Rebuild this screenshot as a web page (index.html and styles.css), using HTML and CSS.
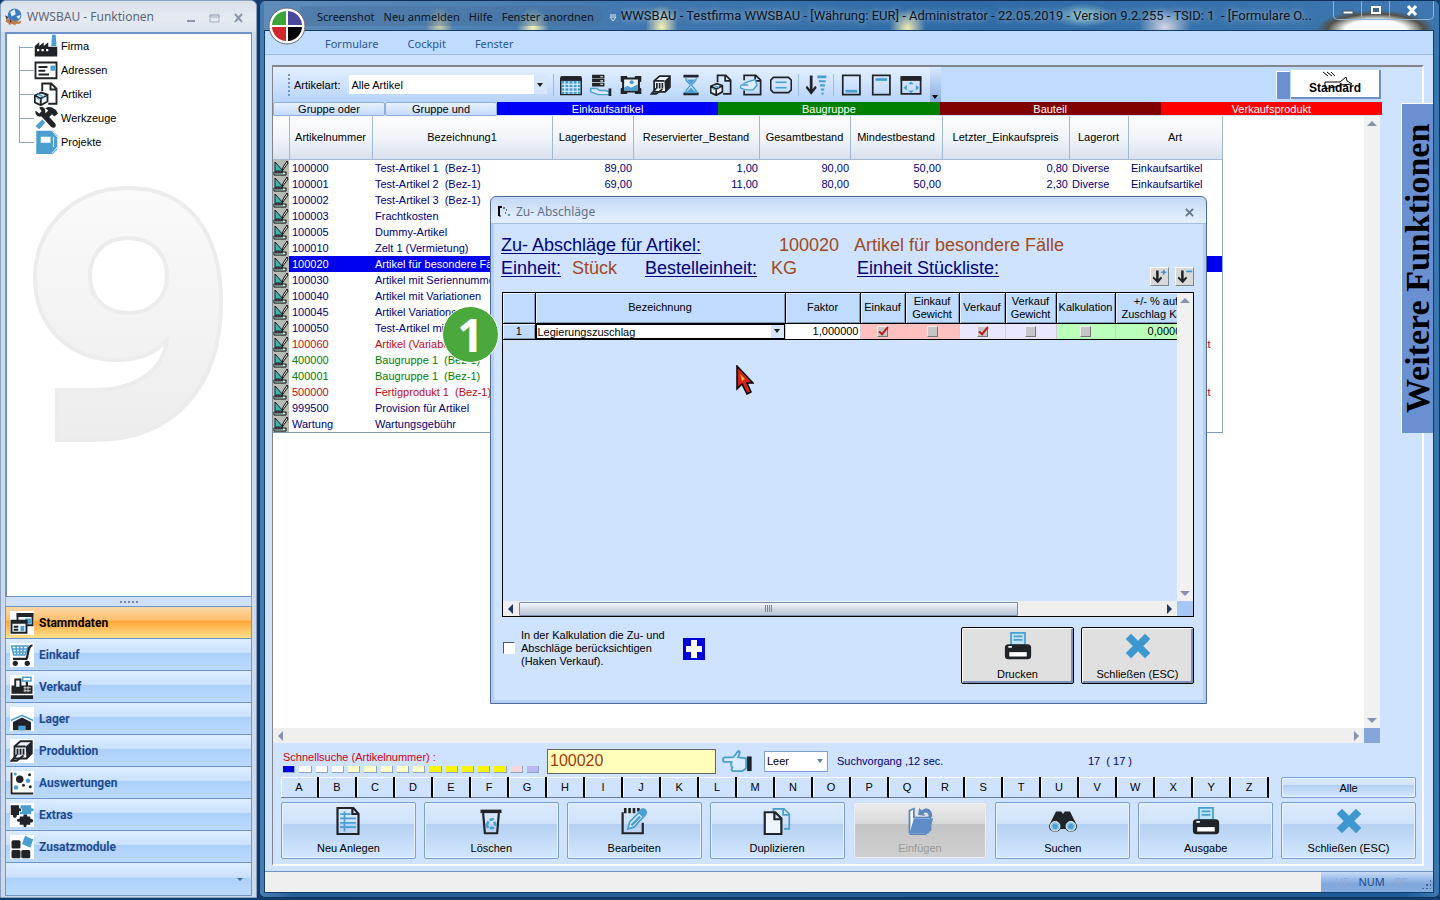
FILE: index.html
```html
<!DOCTYPE html>
<html lang="de">
<head>
<meta charset="utf-8">
<title>WWSBAU</title>
<link rel="stylesheet" href="styles.css">
</head>
<body>
<svg class="defs" aria-hidden="true">
  <symbol id="i-factory" viewBox="0 0 32 32"><path class="k" d="M1 30V16l6-5v5l6-5v5l6-5v6h4V30z M23 17h8v13h-9z"/><path class="b" d="M24 1h5l1 15h-7z"/><path class="w" d="M4 20h3v3H4zM10 20h3v3h-3zM16 20h3v3h-3z"/></symbol>
  <symbol id="i-card" viewBox="0 0 32 32"><path class="ks" d="M2 6h28v21H2z"/><path class="ks" d="M6 12h12M6 17h9M6 22h14"/><path class="b" d="M22 10h6v7h-6z"/></symbol>
  <symbol id="i-article" viewBox="0 0 32 32"><path class="ks" d="M11 12V2h12l7 7v20H19M22 2v8h8"/><path class="ks wf" d="M1 18l9-4 8 3v9l-9 5-8-4zM1 18l8 4 9-5M9 22v9"/><path class="bs" d="M5 16l8 4M4 21l3 2"/></symbol>
  <symbol id="i-tools" viewBox="0 0 32 32"><path class="k" d="M2 6l5 4 3-3-3-5c5-2 9 1 8 7l13 14c3 4-1 8-5 5L10 14C5 15 1 12 2 6z"/><path class="k" d="M15 3c5-3 9-2 12 1l2 1 3 5-5 4-3-3-5 5-5-5 5-5z"/><path class="b" d="M11 18l4 4-8 9-5-4z"/></symbol>
  <symbol id="i-book" viewBox="0 0 32 32"><path class="b" d="M3 1h22l6 6v19l-6 6H3z"/><path class="w" d="M9 9h13v8H9z"/><path d="M24 1l7 8M24 31l7-8M26 9v14" stroke="#d8ecf8" stroke-width="1.5"/></symbol>
  <symbol id="i-stamm" viewBox="0 0 32 32"><path class="ks wf" d="M10 4h20v15H10z"/><path class="k" d="M9 3h22v5H9z"/><path class="b" d="M20 10h8v7h-8z"/><path class="ks wf" d="M2 13h20v16H2z"/><path class="k" d="M2 12h21v5H2z"/><path class="ks" d="M5 21h6M5 25h6"/><path class="b" d="M14 20h5v7h-5z"/></symbol>
  <symbol id="i-cart" viewBox="0 0 32 32"><path class="bs" d="M2 4h22l-4 12H5zM3 8h19M4 12h17M8 4l1 12M13 4v12M18 4l-1 12"/><path d="M30 3c-7 1-5 12-8 18H4" fill="none" stroke="#202428" stroke-width="3"/><circle class="k" cx="7" cy="27" r="3.5"/><circle class="k" cx="23" cy="27" r="3.5"/></symbol>
  <symbol id="i-register" viewBox="0 0 32 32"><path class="k" d="M2 14h28v11H2zM1 27h30v5H1z"/><path class="ks wf" d="M7 6h7v11H7z"/><path class="bs" d="M17 3h11v5H17z"/><path class="k" d="M21 9h3v6h-3z"/><path d="M18 17h10M18 21h10M20 15v8M24 15v8" stroke="#fff"/></symbol>
  <symbol id="i-hall" viewBox="0 0 32 32"><path d="M1 18l15-7 15 7" fill="none" stroke="#4a9fd0" stroke-width="2"/><path class="k" d="M4 20l12-6 12 6v11H4z"/><path class="b" d="M11 25h10v6H11z"/></symbol>
  <symbol id="i-prod" viewBox="0 0 32 32"><path class="ks wf" d="M6 10l8-7h15v16l-7 7H6z"/><path class="k" d="M21 10l8-7v16l-7 8z"/><path class="ks" d="M6 10h15M10 13v8M14 13v8M18 13v8M9 21l-7 8h7l9-7"/></symbol>
  <symbol id="i-chart" viewBox="0 0 32 32"><path class="ks" d="M2 2v28h29"/><circle class="k" cx="13" cy="11" r="5"/><circle class="k" cx="26" cy="5" r="2"/><circle class="k" cx="18" cy="19" r="2"/><circle class="k" cx="27" cy="21" r="2"/><circle class="b" cx="24" cy="13" r="3"/><circle class="b" cx="8" cy="22" r="3"/><circle class="b" cx="7" cy="4" r="2"/></symbol>
  <symbol id="i-puzzle" viewBox="0 0 32 32"><path class="k" d="M1 3h11v4c4-1 4 5 0 4v5H9c1 5-6 5-5 0H1z"/><path class="b" d="M14 3h14v4c5-1 5 5 0 4v4h-5c0 4-6 4-5 0h-5v-3c4 1 4-6 1-5z"/><path class="k" d="M13 18h5c-1-3 6-3 5 0h4v3c5-1 5 6 0 5v3h-5c1 4-5 4-4 0h-5v-4c-5 1-5-5 0-4z"/></symbol>
  <symbol id="i-modules" viewBox="0 0 32 32"><rect class="k" x="2" y="7" width="12" height="11" rx="2"/><rect class="k" x="2" y="20" width="12" height="11" rx="2"/><rect class="k" x="15" y="20" width="12" height="11" rx="2"/><path class="b" d="M20 1l11 5-4 11-11-5z"/></symbol>
  <symbol id="i-grid" viewBox="0 0 32 32"><path class="b" d="M2 5h28v24H2z"/><path d="M2 15h28M2 20h28M2 25h28M7 10v20M13 10v20M19 10v20M25 10v20" stroke="#e8f4ff" stroke-width="1.5"/><path class="k" d="M1 3h30v7H1z"/><path d="M1 5v25h30V5" fill="none" stroke="#202428" stroke-width="2"/></symbol>
  <symbol id="i-server" viewBox="0 0 32 32"><path class="k" d="M3 1h18v5H3zM3 7h18v5H3zM3 13h18v5H3z"/><path d="M15 4h4M15 10h4M15 15h4" stroke="#fff" stroke-width="1.5"/><path d="M1 21h9l4 3h9l5 2v4H12L1 26z" fill="#dcebfc" stroke="#4a9fd0" stroke-width="2"/><path class="k" d="M27 21h4v11h-4z"/></symbol>
  <symbol id="i-image" viewBox="0 0 32 32"><path class="k" d="M1 3h9l1 2h10l1-2h9v8l-2 1v8l2 1v8h-9l-1-2H11l-1 2H1v-8l2-1v-8l-2-1z"/><path fill="#eaf4fd" d="M6 8h20v16H6z"/><path class="b" d="M6 20l5-3 5 3 10-5v9H6z"/><circle class="b" cx="17" cy="12" r="3"/></symbol>
  <symbol id="i-hour" viewBox="0 0 32 32"><path class="k" d="M5 1h22v4H5zM5 27h22v4H5z"/><path class="bs" d="M8 5c0 7 7 8 7 11s-7 5-7 11h16c0-6-7-8-7-11s7-4 7-11"/><path class="b" d="M10 8h12l-6 7zM16 20l7 7H9z"/></symbol>
  <symbol id="i-link" viewBox="0 0 32 32"><path class="ks" d="M6 9V2h17l7 7v21H6v-6M22 2v8h8"/><path d="M5 14l7-3 10-3 3 8-6 7H8l-6-2c-3-2-1-6 2-5h8" fill="#dcebfc" stroke="#4a9fd0" stroke-width="2"/></symbol>
  <symbol id="i-label" viewBox="0 0 32 32"><path class="ks" d="M5 5h22l4 4v14l-4 4H5l-4-4V9z"/><path class="bs" d="M8 12h16M8 20h16"/></symbol>
  <symbol id="i-sort" viewBox="0 0 32 32"><path class="k" d="M7 2h4v20l4-5 2 3-8 10-8-10 2-3 4 5z"/><path class="b" d="M18 2h13v4H18zM20 9h10v3H20zM22 15h7v3h-7zM23 21h5v3h-5zM24 27h3v3h-3z"/></symbol>
  <symbol id="i-bot" viewBox="0 0 32 32"><path class="ks" d="M4 2h25v28H4z"/><path class="b" d="M8 23h17v4H8z"/></symbol>
  <symbol id="i-top" viewBox="0 0 32 32"><path class="ks" d="M4 2h25v28H4z"/><path class="b" d="M8 6h17v4H8z"/></symbol>
  <symbol id="i-move" viewBox="0 0 32 32"><path class="ks" d="M2 5h28v24H2z"/><path class="k" d="M1 3h30v7H1z"/><path class="b" d="M16 11l4 4h-8zM16 28l4-4h-8zM5 20l5-4v8zM28 20l-5-4v8z"/></symbol>
  <symbol id="i-ruler" viewBox="0 0 16 16"><path fill="#b8bab4" d="M0 0h16v16H0z"/><path d="M2 2v9h8z" fill="#39b7a2" stroke="#123" stroke-width="1"/><path d="M1 12h12v3H1z" fill="#dff" stroke="#000"/><path d="M3 12v2M5 12v2M7 12v2M9 12v2" stroke="#000"/><path d="M14 1l1 2-5 7-1-1z" fill="#fff" stroke="#000"/></symbol>
  <symbol id="i-new" viewBox="0 0 32 32"><path class="ks" d="M4 1h18l6 7v23H4zM21 1v7h7"/><path class="bs" d="M7 8h12M7 13h18M7 18h18M7 23h18M12 5v23"/></symbol>
  <symbol id="i-bin" viewBox="0 0 32 32"><path class="k" d="M4 3h24v4H4z"/><path class="ks" d="M7 7l2 23h14l2-23"/><path d="M11 21l3-6 4-1 3 6-3 4h-5z" fill="none" stroke="#4a9fd0" stroke-width="3" stroke-dasharray="5 2"/></symbol>
  <symbol id="i-edit" viewBox="0 0 32 32"><path class="ks" d="M3 6v24h23V18"/><path d="M6 1v6M11 1v6M16 1v6M21 1v4" stroke="#202428" stroke-width="3"/><path d="M9 25l2-8L23 5l5 5-12 13z" fill="#dcebfc" stroke="#4a9fd0" stroke-width="2"/><path class="b" d="M24 2c4-3 9 3 6 7l-4 3-6-6zM12 20l10-10 2 2-10 10z"/></symbol>
  <symbol id="i-copy" viewBox="0 0 32 32"><path class="bs" d="M12 5V2h12l6 6v17h-6M23 2v7h7"/><path class="ks wf" d="M2 6h12l7 7v18H2zM13 6v8h8"/></symbol>
  <symbol id="i-paste" viewBox="0 0 32 32"><path d="M4 30V4l5-2v10h15l4-1v15l-6 5H4" fill="#fff" stroke="#5a86c0" stroke-width="2"/><path d="M9 13h22l-5 17H4z" fill="#5f8dca"/><path d="M14 9l1-8 3 3c6-5 12-1 12 7h-4c0-4-3-6-6-4l2 3z" fill="#5a86c0"/></symbol>
  <symbol id="i-bino" viewBox="0 0 32 32"><path class="k" d="M8 5h6l2 3 2-3h6l8 16a7 7 0 01-13 4h-6A7 7 0 010 21z"/><circle cx="7" cy="22" r="5.500" fill="#8fc4ea" stroke="#fff" stroke-width="1"/><circle cx="25" cy="22" r="5.500" fill="#8fc4ea" stroke="#fff" stroke-width="1"/><circle class="b" cx="7" cy="22" r="3"/><circle class="b" cx="25" cy="22" r="3"/></symbol>
  <symbol id="i-print" viewBox="0 0 32 32"><path d="M8 1h16v14H8z" fill="#bfe4f8" stroke="#4a9fd0" stroke-width="2"/><path class="bs" d="M11 5h10M11 9h10"/><rect class="k" x="1" y="14" width="30" height="17" rx="4"/><path class="w" d="M6 23h20v5H6z"/><path d="M5 17h4" stroke="#fff" stroke-width="2"/></symbol>
  <symbol id="i-x" viewBox="0 0 32 32"><path fill="#3f97cf" d="M2 8l6-6 8 8 8-8 6 6-8 8 8 8-6 6-8-8-8 8-6-6 8-8z"/></symbol>
  <symbol id="i-hand" viewBox="0 0 32 24"><path d="M12 8H3c-3 0-3 5 0 5h8M12 8c2-2 4-6 6-7 2 1 0 5-1 7l9 1v11l-4 3H12c-3 0-2-4 0-4-3 0-3-5-1-6" fill="#dcebff" stroke="#4a9fd0" stroke-width="2"/><path class="k" d="M27 7h5v16h-5z"/></symbol>
  <symbol id="i-down" viewBox="0 0 20 20"><path class="k" d="M6 3h3v10l3-3 1 2-5 6-6-6 1-2 3 3z"/></symbol>
</svg>

<aside class="win nav-win">
  <header class="nav-title">
    <svg class="ic18" viewBox="0 0 32 32"><circle cx="17" cy="13" r="12" fill="#3b7dc4"/><path d="M9 7l8-5 2 9-7 4zM20 15l8-3-3 8z" fill="#e4f0fa"/><path d="M3 19h4l1 4 4-3 4 4 5-3 2 4 6-3-2 6h-7l-3 3-4-3-5 2-3-4-4-1z" fill="#c07a48"/><path d="M0 13l6 3-3 5zM8 20l4 3-3 3z" fill="#4a3a28"/></svg>
    <h1>WWSBAU - Funktionen</h1>
    <span class="capt"><svg viewBox="0 0 70 20"><path d="M6 14h8" stroke="#8a97ab" stroke-width="2"/><path d="M29 8h9v7h-9zM29 8h9v2h-9z" fill="none" stroke="#a5b0c2" stroke-width="1"/><path d="M54 7l7 8M61 7l-7 8" stroke="#8a97ab" stroke-width="2"/></svg></span>
  </header>
  <div class="tree">
    <ul>
      <li><svg class="ic24"><use href="#i-factory"/></svg>Firma</li>
      <li><svg class="ic24"><use href="#i-card"/></svg>Adressen</li>
      <li><svg class="ic24"><use href="#i-article"/></svg>Artikel</li>
      <li><svg class="ic24"><use href="#i-tools"/></svg>Werkzeuge</li>
      <li><svg class="ic24"><use href="#i-book"/></svg>Projekte</li>
    </ul>
    <svg class="nine" viewBox="0 0 190 256" aria-hidden="true"><defs><linearGradient id="fade" x1="0" y1="0" x2="0" y2="1"><stop offset="0" stop-color="#fafafa"/><stop offset="1" stop-color="#ededed"/></linearGradient></defs><path d="M95 2C40 2 2 42 2 92s36 82 82 82c22 0 38-6 50-20-4 32-32 50-74 50H24v50h38c80 0 126-54 126-138C188 42 152 2 95 2zM95 52c24 0 39 16 39 38 0 23-16 37-39 37S57 112 57 90s14-38 38-38z" fill="url(#fade)" fill-rule="evenodd" stroke="#ececec" stroke-width="4"/></svg>
  </div>
  <div class="splitter"><i></i><i></i><i></i><i></i><i></i></div>
  <nav class="modules">
    <button class="active"><svg class="ic24"><use href="#i-stamm"/></svg>Stammdaten</button>
    <button><svg class="ic24"><use href="#i-cart"/></svg>Einkauf</button>
    <button><svg class="ic24"><use href="#i-register"/></svg>Verkauf</button>
    <button><svg class="ic24"><use href="#i-hall"/></svg>Lager</button>
    <button><svg class="ic24"><use href="#i-prod"/></svg>Produktion</button>
    <button><svg class="ic24"><use href="#i-chart"/></svg>Auswertungen</button>
    <button><svg class="ic24"><use href="#i-puzzle"/></svg>Extras</button>
    <button><svg class="ic24"><use href="#i-modules"/></svg>Zusatzmodule</button>
    <div class="more"><span class="tri down small"></span></div>
  </nav>
</aside>

<main class="win main-win">
  <header class="main-title">
    <svg class="orb" viewBox="0 0 38 38"><circle cx="19" cy="19" r="18" fill="#fff" stroke="#667" stroke-width="1"/><path d="M18 18V4A15 15 0 004 18z" fill="#3da43a"/><path d="M20 18V4a15 15 0 0114 14z" fill="#4a479c"/><path d="M18 20v14A15 15 0 014 20z" fill="#d3262b"/><path d="M20 20v14a15 15 0 0014-14z" fill="#050505"/></svg>
    <div class="quick"><span>Screenshot</span><span>Neu anmelden</span><span>Hilfe</span><span>Fenster anordnen</span></div>
    <svg class="qdrop" viewBox="0 0 8 10"><path d="M1 2h6M1 4l3 4 3-4z" stroke="#dbe9f8" fill="none"/></svg>
    <h2>WWSBAU - Testfirma WWSBAU - [Währung: EUR] - Administrator - 22.05.2019 - Version 9.2.255 - TSID: 1&nbsp; - [Formulare O...</h2>
    <div class="winbtns"><button aria-label="Minimieren"><svg viewBox="0 0 12 12"><path d="M1 7h10v3H1z" fill="#fff" stroke="#456"/></svg></button><button aria-label="Maximieren"><svg viewBox="0 0 12 12"><path d="M2 3h8v6H2z" fill="#468" stroke="#fff" stroke-width="2"/></svg></button><button aria-label="Beenden"><svg viewBox="0 0 12 12"><path d="M2 2l8 9M10 2l-8 9" stroke="#fff" stroke-width="3"/></svg></button></div>
  </header>
  <div class="client">
    <nav class="menu"><a href="#">Formulare</a><a href="#">Cockpit</a><a href="#">Fenster</a></nav>
    <div class="sheet">
      <div class="toolbar">
        <div class="tools">
          <i class="grip"></i>
          <label for="art">Artikelart:</label>
          <span class="sel wide"><select id="art"><option>Alle Artikel</option></select></span>
          <i class="sep"></i>
          <svg class="ic22"><use href="#i-grid"/></svg><svg class="ic22"><use href="#i-server"/></svg><svg class="ic22"><use href="#i-image"/></svg><svg class="ic22"><use href="#i-prod"/></svg><svg class="ic22"><use href="#i-hour"/></svg><svg class="ic22"><use href="#i-article"/></svg><svg class="ic22"><use href="#i-link"/></svg><svg class="ic22"><use href="#i-label"/></svg>
          <i class="sep"></i><svg class="ic22"><use href="#i-sort"/></svg><i class="sep"></i>
          <svg class="ic22"><use href="#i-bot"/></svg><svg class="ic22"><use href="#i-top"/></svg><svg class="ic22"><use href="#i-move"/></svg>
          <span class="overflow"><span class="tri down black"></span></span>
        </div>
        <i class="bluebox"></i>
        <button class="standard"><svg viewBox="0 0 32 20"><path d="M2 1l5 4M6 1l5 4M10 1l4 4M4 17v-6h15M19 11l6-5 1 4 5 3-12 1c-5 3-9 2-15 4" fill="none" stroke="#000"/></svg><span>Standard</span></button>
      </div>
      <div class="groups">
        <button>Gruppe oder</button><button>Gruppe und</button>
        <span class="g-blue">Einkaufsartikel</span><span class="g-green">Baugruppe</span><span class="g-dark">Bauteil</span><span class="g-red">Verkaufsprodukt</span>
      </div>
      <div class="list">
        <div class="rows">
        <table class="items">
          <colgroup><col class="c0"><col class="c1"><col class="c2"><col class="c3"><col class="c4"><col class="c5"><col class="c6"><col class="c7"><col class="c8"><col class="c9"></colgroup>
          <thead><tr><th></th><th>Artikelnummer</th><th>Bezeichnung1</th><th>Lagerbestand</th><th>Reservierter_Bestand</th><th>Gesamtbestand</th><th>Mindestbestand</th><th>Letzter_Einkaufspreis</th><th>Lagerort</th><th>Art</th></tr></thead>
          <tbody>
          <tr><td><svg><use href="#i-ruler"/></svg></td><td>100000</td><td>Test-Artikel 1&nbsp; (Bez-1)</td><td class="n">89,00</td><td class="n">1,00</td><td class="n">90,00</td><td class="n">50,00</td><td class="n">0,80</td><td>Diverse</td><td>Einkaufsartikel</td></tr>
          <tr><td><svg><use href="#i-ruler"/></svg></td><td>100001</td><td>Test-Artikel 2&nbsp; (Bez-1)</td><td class="n">69,00</td><td class="n">11,00</td><td class="n">80,00</td><td class="n">50,00</td><td class="n">2,30</td><td>Diverse</td><td>Einkaufsartikel</td></tr>
          <tr><td><svg><use href="#i-ruler"/></svg></td><td>100002</td><td>Test-Artikel 3&nbsp; (Bez-1)</td><td colspan="7"></td></tr>
          <tr><td><svg><use href="#i-ruler"/></svg></td><td>100003</td><td>Frachtkosten</td><td colspan="7"></td></tr>
          <tr><td><svg><use href="#i-ruler"/></svg></td><td>100005</td><td>Dummy-Artikel</td><td colspan="7"></td></tr>
          <tr><td><svg><use href="#i-ruler"/></svg></td><td>100010</td><td>Zelt 1 (Vermietung)</td><td colspan="7"></td></tr>
          <tr class="sel-row"><td><svg><use href="#i-ruler"/></svg></td><td>100020</td><td>Artikel für besondere Fälle</td><td colspan="7"></td></tr>
          <tr><td><svg><use href="#i-ruler"/></svg></td><td>100030</td><td>Artikel mit Seriennummer</td><td colspan="7"></td></tr>
          <tr><td><svg><use href="#i-ruler"/></svg></td><td>100040</td><td>Artikel mit Variationen</td><td colspan="7"></td></tr>
          <tr><td><svg><use href="#i-ruler"/></svg></td><td>100045</td><td>Artikel Variationen</td><td colspan="7"></td></tr>
          <tr><td><svg><use href="#i-ruler"/></svg></td><td>100050</td><td>Test-Artikel mit</td><td colspan="7"></td></tr>
          <tr class="red"><td><svg><use href="#i-ruler"/></svg></td><td>100060</td><td>Artikel (Variabel)</td><td colspan="6"></td><td>Verkaufsprodukt</td></tr>
          <tr class="green"><td><svg><use href="#i-ruler"/></svg></td><td>400000</td><td>Baugruppe 1&nbsp; (Bez-1)</td><td colspan="7"></td></tr>
          <tr class="green"><td><svg><use href="#i-ruler"/></svg></td><td>400001</td><td>Baugruppe 1&nbsp; (Bez-1)</td><td colspan="7"></td></tr>
          <tr class="red"><td><svg><use href="#i-ruler"/></svg></td><td>500000</td><td>Fertigprodukt 1&nbsp; (Bez-1)</td><td colspan="6"></td><td>Verkaufsprodukt</td></tr>
          <tr><td><svg><use href="#i-ruler"/></svg></td><td>999500</td><td>Provision für Artikel</td><td colspan="7"></td></tr>
          <tr><td><svg><use href="#i-ruler"/></svg></td><td>Wartung</td><td>Wartungsgebühr</td><td colspan="7"></td></tr>
          </tbody>
        </table>
        </div>
        <div class="vbar"><span class="tri up"></span><span class="tri down"></span></div>
        <div class="hbar"><span class="tri left"></span><span class="tri right"></span></div>
        <div class="corner"></div>
      </div>
      <div class="search">
        <div class="s-label"><label for="q">Schnellsuche (Artikelnummer) :</label>
          <div class="cells"><i class="n"></i><i></i><i></i><i></i><i class="p"></i><i class="p"></i><i class="p"></i><i class="p"></i><i class="p"></i><i class="y"></i><i class="y"></i><i class="y"></i><i class="y"></i><i class="y"></i><i class="r"></i><i class="v"></i></div></div>
        <input id="q" type="text" value="100020">
        <svg class="hand"><use href="#i-hand"/></svg>
        <span class="sel short"><select aria-label="Filter"><option>Leer</option></select></span>
        <span class="time">Suchvorgang ,12 sec.</span><span class="count">17&nbsp; ( 17 )</span>
      </div>
      <div class="foot">
        <div class="abc"><button>A</button><button>B</button><button>C</button><button>D</button><button>E</button><button>F</button><button>G</button><button>H</button><button>I</button><button>J</button><button>K</button><button>L</button><button>M</button><button>N</button><button>O</button><button>P</button><button>Q</button><button>R</button><button>S</button><button>T</button><button>U</button><button>V</button><button>W</button><button>X</button><button>Y</button><button>Z</button></div>
        <button class="all">Alle</button>
        <button class="act"><svg><use href="#i-new"/></svg>Neu Anlegen</button>
        <button class="act"><svg><use href="#i-bin"/></svg>Löschen</button>
        <button class="act"><svg><use href="#i-edit"/></svg>Bearbeiten</button>
        <button class="act"><svg><use href="#i-copy"/></svg>Duplizieren</button>
        <button class="act" disabled><svg><use href="#i-paste"/></svg>Einfügen</button>
        <button class="act"><svg><use href="#i-bino"/></svg>Suchen</button>
        <button class="act"><svg><use href="#i-print"/></svg>Ausgabe</button>
        <button class="act"><svg><use href="#i-x"/></svg>Schließen (ESC)</button>
      </div>
    </div>
    <button class="side-tab">Weitere Funktionen</button>
    <footer class="status"><div class="s-right"><span class="dim">UF</span><span>NUM</span><span class="dim">RF</span><i class="size"></i></div></footer>

    <section class="dialog">
      <header><svg viewBox="0 0 14 14"><path d="M2 11V2h3" stroke="#000" stroke-width="2" fill="none"/><path d="M6 3h2M9 5h1M8 8h1M2 11h2" stroke="#000" stroke-width="1"/><path d="M11 10h2" stroke="#3a9" stroke-width="2"/></svg><h3>Zu- Abschläge</h3><button aria-label="Dialog schließen"><svg viewBox="0 0 10 10"><path d="M1 1l8 8M9 1L1 9" stroke="#66748c" stroke-width="2"/></svg></button></header>
      <div class="d-body">
        <div class="d-head">
          <u class="h-art">Zu- Abschläge für Artikel:</u><b class="nr">100020</b><b>Artikel für besondere Fälle</b>
          <u>Einheit:</u><b>Stück</b><u>Bestelleinheit:</u><b>KG</b>
          <div class="d-last"><u>Einheit Stückliste:</u><button aria-label="Einblenden"><svg viewBox="0 0 20 20"><use href="#i-down"/><path d="M12 5h6M15 2v6" stroke="#3f97cf" stroke-width="2"/></svg></button><button aria-label="Ausblenden"><svg viewBox="0 0 20 20"><use href="#i-down"/><path d="M12 4h7" stroke="#3f97cf" stroke-width="2"/></svg></button></div>
        </div>
        <div class="d-grid">
          <div class="d-rows">
          <table>
            <colgroup><col class="d0"><col class="d1"><col class="d2"><col class="d3"><col class="d4"><col class="d5"><col class="d6"><col class="d7"><col class="d8"></colgroup>
            <thead><tr><th></th><th>Bezeichnung</th><th>Faktor</th><th>Einkauf</th><th>Einkauf<br>Gewicht</th><th>Verkauf</th><th>Verkauf<br>Gewicht</th><th>Kalkulation</th><th>+/- % auf<br>Zuschlag Kalk</th></tr></thead>
            <tbody><tr><th>1</th><td><span class="sel cell"><select aria-label="Bezeichnung"><option>Legierungszuschlag</option></select></span></td><td class="num">1,000000</td><td class="pink"><input type="checkbox" checked aria-label="Einkauf"></td><td class="pink"><input type="checkbox" aria-label="Einkauf Gewicht"></td><td class="lav"><input type="checkbox" checked aria-label="Verkauf"></td><td class="lav"><input type="checkbox" aria-label="Verkauf Gewicht"></td><td class="lime"><input type="checkbox" aria-label="Kalkulation"></td><td class="lime num">0,000000</td></tr></tbody>
          </table>
          </div>
          <div class="vbar"><span class="tri up"></span><span class="tri down"></span></div>
          <div class="hbar"><span class="tri left dark"></span><span class="thumb"><i></i><i></i><i></i><i></i></span><span class="tri right dark"></span></div>
          <div class="corner"></div>
        </div>
        <div class="d-foot">
          <input id="calc" type="checkbox"><label for="calc">In der Kalkulation die Zu- und Abschläge berücksichtigen (Haken Verkauf).</label>
          <button class="plus" aria-label="Hinzufügen"></button>
          <button class="grey"><svg><use href="#i-print"/></svg>Drucken</button>
          <button class="grey"><svg><use href="#i-x"/></svg>Schließen (ESC)</button>
        </div>
      </div>
      <svg class="cursor" viewBox="0 0 18 30"><path d="M1 1v23l5-5 5 10 4-2-4-9h6z" fill="#d2231a" stroke="#000" stroke-width="1.500"/><path d="M4 9l5 5-3 2z" fill="#ffb030"/></svg>
      <div class="badge">1</div>
    </section>
  </div>
</main>
</body>
</html>
```
FILE: styles.css
```css
* { box-sizing: border-box; }
body { margin: 0; height: 100vh; min-height: 900px; display: flex; gap: 2px; padding-bottom: 2px; overflow: hidden; background: #123c6c; font: 11px/14px "Liberation Sans", Arial, sans-serif; color: #000; }
h1, h2, h3, ul { margin: 0; padding: 0; font-weight: normal; }
button { font: inherit; color: inherit; padding: 0; border: 0; background: none; }
a { color: inherit; text-decoration: none; }
.defs { position: absolute; width: 0; height: 0; }
.k { fill: #202428; }
.b { fill: #4a9fd0; }
.w { fill: #fff; }
.ks { fill: none; stroke: #202428; stroke-width: 2.5; }
.bs { fill: none; stroke: #4a9fd0; stroke-width: 2; }
.wf { fill: #eef5fc; }
.ic18 { width: 18px; height: 18px; }
.ic24 { width: 24px; height: 24px; flex: none; }
.ic22 { width: 22px; height: 22px; flex: none; }

.tri { width: 0; height: 0; border: 5px solid transparent; flex: none; }
.tri.up { border-top: 0; border-bottom-color: #8693ab; }
.tri.down { border-bottom: 0; border-top-color: #8693ab; }
.tri.left { border-left: 0; border-right-color: #8693ab; }
.tri.right { border-right: 0; border-left-color: #8693ab; }
.tri.dark.left { border-right-color: #26365c; }
.tri.dark.right { border-left-color: #26365c; }
.tri.small { border-width: 3px 3px 0; border-top-color: #3c6ca8; }
.tri.black { border-width: 4px 3px 0; border-top-color: #000; }

/* Module window */
.nav-win { width: 257px; flex: none; display: flex; flex-direction: column; padding: 0 4px 1px; border: 1px solid #8aa0c0; border-radius: 6px 6px 0 0; background: #ccdaec; }
.nav-title { height: 31px; flex: none; display: flex; align-items: center; gap: 4px; margin: 0 -4px; padding: 0 5px 0 4px; border-radius: 6px 6px 0 0; background: linear-gradient(#d9e0ea, #e6eaf1 60%, #dce4ee); color: #5b6675; }
.nav-title h1 { flex: 1; font: 12px/18px "Noto Sans", sans-serif; }
.capt svg { width: 70px; height: 20px; display: block; }
.tree { flex: 1; position: relative; overflow: hidden; border: 1px solid #6d93c8; border-width: 2px 1px 1px 2px; background: #fff; }
.tree ul { list-style: none; margin-left: 12px; }
.tree li { height: 24px; display: flex; align-items: center; gap: 3px; padding-left: 15px; position: relative; }
.tree li::before { content: ""; position: absolute; left: 0; top: -12px; width: 14px; height: 24px; border: solid #8aa6c8; border-width: 0 0 1px 1px; }
.tree li:first-child::before { top: 12px; height: 1px; border-left: 0; }
.nine { display: block; width: 190px; height: 256px; margin: 32px 0 0 26px; }
.splitter { height: 9px; display: flex; gap: 2px; align-items: center; justify-content: center; background: #cfe0f7; border: solid #86a9d8; border-width: 0 1px; }
.splitter i { width: 2px; height: 2px; background: #6f8ab5; }
.modules { border: 1px solid #7096cb; }
.modules button, .more { width: 100%; height: 32px; display: flex; align-items: center; gap: 5px; padding-left: 4px; border-bottom: 1px solid #6b93cc; background: linear-gradient(#deedff, #c9e0fd 45%, #add0fb 46%, #bcdafe); color: #1f4b8e; font: bold 12px/16px Roboto, sans-serif; text-align: left; }
.modules .ic24 { background: #fff; }
.modules .active { background: linear-gradient(#fbd8a8, #fdc06f 42%, #fda63a 46%, #fee08a); color: #000; }
.more { justify-content: flex-end; padding-right: 8px; border-bottom: 0; }

/* Main window */
.main-win { flex: 1; min-width: 0; display: flex; flex-direction: column; padding: 0 6px 5px 5px; border-radius: 6px; background: linear-gradient(90deg, #4b80b5, #255f98 3%, #1e5d96 97%, #3b79b0); box-shadow: inset 0 0 0 1px #10305a; }
.main-title { height: 29px; flex: none; display: flex; margin: 1px 0 0; color: #0a1422;
  background: radial-gradient(ellipse 14px 18px at 15% 80%, #d8d4a8, transparent), radial-gradient(ellipse 16px 20px at 23% 90%, #fbf3b4, transparent), radial-gradient(ellipse 16px 22px at 34% 90%, #faf1b4, transparent), radial-gradient(ellipse 18px 20px at 55% 95%, #f6edb0, transparent), radial-gradient(ellipse 30px 12px at 70% 50%, #8fc3c8, transparent), radial-gradient(ellipse 26px 20px at 77% 90%, #d5d9e6, transparent), radial-gradient(ellipse 60px 20px at 95% 100%, #fff 50%, #50504a 80%, transparent), linear-gradient(90deg, #5f8cba, #3f76ad 35%, #2f6aa5 60%, #3f78b0); }
.orb { width: 38px; height: 38px; position: relative; z-index: 2; margin: 6px 0 0 4px; flex: none; }
.quick { display: flex; gap: 9px; height: 20px; margin: 5px 0 0 -6px; padding: 0 9px 0 17px; border-radius: 0 10px 10px 0; background: rgba(70, 110, 155, .45); font: 11px/22px "Noto Sans", sans-serif; white-space: nowrap; }
.qdrop { width: 8px; height: 10px; margin: 12px 4px 0 6px; flex: none; }
.main-title h2 { flex: 1; min-width: 0; overflow: hidden; white-space: nowrap; font: 13px/30px Roboto, sans-serif; text-shadow: 0 0 6px rgba(255, 255, 255, .7); }
.winbtns { display: flex; height: 19px; border: 1px solid #8fb4d8; border-top: 0; border-radius: 0 0 5px 5px; }
.winbtns button { width: 28px; display: grid; place-items: center; border-right: 1px solid #8fb4d8; }
.winbtns button:last-child { width: 43px; border: 0; }
.winbtns svg { width: 12px; height: 12px; }

.client { flex: 1; min-height: 0; position: relative; display: flex; flex-direction: column; border: 1px solid #123c6c; background: #cfe3ff; }
.menu { height: 24px; flex: none; display: flex; gap: 29px; padding-left: 60px; border-bottom: 1px solid #9dbce4; background: #bfdbff; color: #2b5797; font: 11px/26px "Noto Sans", sans-serif; }
.sheet { flex: 1; min-height: 0; display: flex; flex-direction: column; margin: 10px 9px 5px 7px; border: 2px solid #fff; border-top-color: #80858d; border-left: 1px solid #80858d; }
.toolbar { height: 35px; flex: none; display: flex; align-items: center; margin-right: 41px; background: #bfdbff; }
.tools { display: flex; align-items: center; gap: 8px; height: 35px; padding-left: 15px; background: linear-gradient(#e3efff, #cfe2fd 50%, #b6d3fa); }
.grip { width: 2px; height: 22px; margin-right: -4px; background: repeating-linear-gradient(#6f94c8 0 2px, transparent 2px 4px); }
.sep { width: 1px; height: 22px; margin: 0 -2px; background: #9dbce4; }
.sel { display: inline-flex; position: relative; }
.sel::after { content: ""; position: absolute; right: 4px; top: calc(50% - 2px); border: 3px solid transparent; border-top: 4px solid #222; border-bottom: 0; pointer-events: none; }
.sel select { appearance: none; width: 100%; height: 100%; border: 0; border-radius: 0; padding: 0 2px; background: linear-gradient(90deg, transparent calc(100% - 13px), #d6e5f8 0) #fff; font: inherit; color: #000; outline: 0; }
.wide { width: 198px; height: 19px; margin-left: 1px; }
.overflow { align-self: stretch; display: flex; align-items: flex-end; padding: 0 3px 3px 2px; background: linear-gradient(#d8e8fd, #86aee0); }
.bluebox { width: 14px; height: 28px; margin-left: auto; background: #6a90d2; border: 1px solid #fff; border-width: 1px 0 0 1px; }
.standard { width: 90px; height: 29px; margin-left: 1px; position: relative; background: #fff; border: solid #6f8fc0; border-width: 0 2px 2px 0; font-weight: bold; font-size: 12px; }
.standard svg { position: absolute; left: 30px; top: 1px; width: 32px; height: 20px; }
.standard span { display: block; padding-top: 8px; }
.groups { height: 14px; flex: none; display: grid; grid-template-columns: 112px 112px repeat(4, 1fr); margin-right: 40px; line-height: 14px; text-align: center; }
.groups button { border: 1px solid #8fb0de; border-radius: 2px; background: linear-gradient(#e8f2ff, #c4dafa); line-height: 12px; }
.groups span { color: #fff; height: 13px; }
.g-blue { background: #0000f5; }
.g-green { background: #008000; }
.g-dark { background: #800000; }
.g-red { background: #f00; }

.list { flex: 1; min-height: 0; display: grid; grid-template: 1fr 15px / 1fr 16px; margin-right: 42px; background: #fff; }
.rows { overflow: hidden; }
.items { table-layout: fixed; width: 949px; border-collapse: collapse; border-bottom: 1px solid #7d9cb8; border-right: 1px solid #8fa9c8; color: #00007c; }
.c0 { width: 16px; } .c1 { width: 83px; } .c2 { width: 180px; } .c3 { width: 81px; } .c4 { width: 126px; } .c5 { width: 91px; } .c6 { width: 92px; } .c7 { width: 127px; } .c8 { width: 59px; } .c9 { width: 94px; }
.items th { height: 43px; padding: 0; font-weight: normal; color: #000; border-right: 1px solid #a3b8d2; border-bottom: 1px solid #a9bbd2; background: linear-gradient(#fdfdfe, #f1f4f9 50%, #d9e1ee); }
.items td { height: 16px; padding: 0 1px 0 3px; white-space: nowrap; overflow: hidden; line-height: 14px; }
.items td:first-child { padding: 0; background: #b8bab4; }
.items td svg { width: 16px; height: 16px; display: block; }
.items .n { text-align: right; }
.items .sel-row td:not(:first-child) { background: #0000f0; color: #fff; }
.items .red td { color: #c00a10; }
.items .green td { color: #008000; }
.vbar { display: flex; flex-direction: column; justify-content: space-between; align-items: center; padding: 5px 0; background: #f1f1f1; }
.hbar { display: flex; justify-content: space-between; align-items: center; padding: 0 5px; background: #efefef; }
.corner { background: #86a5d8; }

.search { display: flex; align-items: center; height: 33px; padding: 3px 0 0 10px; color: #00007c; flex: none; }
.s-label { width: 256px; margin-right: 8px; color: #d4000c; }
.cells { display: flex; gap: 4px; margin-top: 2px; }
.cells i { flex: 1; height: 7px; background: #fff; border: solid #8fa3c8; border-width: 0 1px 1px 0; }
.cells .n { background: #0000d8; } .cells .p { background: #ffffc8; } .cells .y { background: #f6f600; } .cells .r { background: #f6d8d8; } .cells .v { background: #b9b9ee; }
.search input { width: 169px; height: 25px; padding: 0 2px; border: 1px solid #60666e; background: #ffffb9; color: #a33a12; font: 16px/20px "Liberation Sans", sans-serif; outline: 0; }
.hand { width: 32px; height: 22px; margin: 0 11px 0 5px; }
.short { width: 64px; height: 21px; margin-right: 9px; border: 1px solid #7da0d4; }
.short select { background: #fff; }
.short::after { border-top-color: #5c7fb4; }
.time { width: 251px; }
.foot { display: grid; grid-template-columns: repeat(8, 1fr); gap: 4px 8px; padding: 1px 6px 5px 8px; flex: none; }
.abc { grid-column: span 7; display: grid; grid-template-columns: repeat(26, 1fr); margin-right: 4px; height: 21px; }
.abc button { border: solid #000; border-width: 0 2px 1px 0; border-bottom-color: #6d7c94; box-shadow: inset 1px 1px #fff; background: #cfe3ff; }
.all, .act { border: 1px solid #7b9fd4; border-radius: 2px; box-shadow: inset 0 0 0 1px #e6f2ff; background: linear-gradient(#dcebfd, #cfe2fa 38%, #b5d0f2 39%, #d3e8ff); }
.act { height: 57px; display: flex; flex-direction: column; align-items: center; gap: 6px; padding-top: 4px; }
.act svg { width: 28px; height: 28px; flex: none; }
.act:disabled { color: #9a9a9a; border-color: #d9dde3; background: linear-gradient(#ececec, #d8d8d8 38%, #c4c4c4 39%, #d0d0d0); }

.side-tab { position: absolute; right: 0; top: 72px; width: 32px; height: 330px; writing-mode: vertical-rl; background: #6a90d2; border: solid #fff; border-width: 0 1px 1px 0; font: bold 34px/30px "Liberation Serif", serif; transform: rotate(180deg); white-space: nowrap; }
.status { height: 21px; flex: none; display: flex; justify-content: flex-end; border-top: 1px solid #6d93c8; background: #efefef; }
.s-right { width: 112px; display: flex; align-items: center; justify-content: center; gap: 10px; padding-right: 12px; position: relative; background: linear-gradient(#c8dcf8, #7ea6dc 60%, #86aee0); color: #1f4b8e; font: 11px/20px "Noto Sans", sans-serif; }
.dim { color: #93acd0; }
.size { position: absolute; right: 2px; bottom: 3px; width: 10px; height: 10px; background: radial-gradient(#46659a 1px, transparent 1px) 0 0 / 4px 4px; clip-path: polygon(100% 0, 100% 100%, 0 100%); }

/* Surcharge dialog */
.dialog { position: absolute; left: 225px; top: 165px; width: 717px; height: 508px; display: flex; flex-direction: column; border: 1px solid #4f6c98; border-radius: 6px 6px 0 0; background: #b3d0f3; padding: 0 3px 3px; }
.dialog header { height: 27px; flex: none; display: flex; align-items: center; gap: 5px; margin: 0 -3px; padding: 4px 12px 0 6px; border-radius: 6px 6px 0 0; border-bottom: 1px solid #a2c0e6; background: linear-gradient(#c2d8f4, #d9e8fb 60%, #e3efff); color: #60708a; }
.dialog header > svg { width: 14px; height: 14px; }
.dialog h3 { flex: 1; font: 12px/18px "Noto Sans", sans-serif; }
.dialog header button svg { width: 9px; height: 9px; display: block; }
.d-body { flex: 1; min-height: 0; display: flex; flex-direction: column; padding: 10px 9px 16px 8px; background: #cfe3ff; }
.d-head { display: grid; grid-template-columns: 71px 73px 126px 83px 1fr; row-gap: 1px; margin: 0 0 13px -1px; font-size: 18px; line-height: 22px; white-space: nowrap; color: #00007c; }
.h-art { grid-column: span 3; }
.d-head u { text-underline-offset: 2px; }
.d-head b { font-weight: normal; color: #a04a20; }
.d-head .nr { padding-left: 8px; }
.d-last { display: flex; gap: 6px; padding-left: 3px; }
.d-last u { margin-right: auto; }
.d-last button { width: 19px; height: 19px; margin-top: 10px; margin-bottom: -7px; background: #d9d9d9; border: 1px solid #fff; border-right-color: #788; border-bottom-color: #788; }
.d-last svg { width: 17px; height: 17px; display: block; }
.d-grid { flex: 1; min-height: 0; display: grid; grid-template: 1fr 15px / 1fr 16px; border: 1px solid #000; }
.d-rows { overflow: hidden; }
.d-grid table { table-layout: fixed; width: 694px; border-collapse: collapse; }
.d0 { width: 32px; } .d1 { width: 250px; } .d2 { width: 75px; } .d3 { width: 45px; } .d4 { width: 54px; } .d5 { width: 46px; } .d6 { width: 51px; } .d7 { width: 59px; } .d8 { width: 82px; }
.d-grid th { padding: 0; font-weight: normal; line-height: 13px; border-right: 1px solid #000; border-bottom: 1px solid #000; background: #bfdbff; box-shadow: inset 1px 1px #eaf3ff, inset -1px -1px #7f99bd; }
.d-grid thead th { height: 30px; }
.d-grid td { height: 16px; padding: 0; text-align: center; border-bottom: 1px solid #000; border-right: 1px solid #d8c8d8; background: #fff; line-height: 14px; }
.d-grid .num { text-align: right; padding-right: 1px; }
.d-grid td.lime.num { padding-right: 3px; }
.d-grid .pink { background: #ffc0c0; } .d-grid .lav { background: #e9e6ff; } .d-grid .lime { background: #baffba; }
.d-grid input { appearance: none; width: 11px; height: 11px; margin: 1px 0 0; display: block; margin-inline: auto; position: relative; background: #c6c6c6; border: 1px solid #eee; border-right-color: #777; border-bottom-color: #777; }
.d-grid input:checked::after { content: ""; position: absolute; left: 3px; top: -2px; width: 3px; height: 8px; border: solid #c01818; border-width: 0 2px 2px 0; transform: rotate(40deg); }
.cell { display: flex; height: 15px; border: 1px solid #000; }
.cell select { padding: 0 1px; }
.d-grid .corner { background: #a6c6f4; }
.d-grid .thumb { width: 499px; height: 14px; margin-right: auto; margin-left: 6px; display: flex; align-items: center; justify-content: center; gap: 1px; border: 1px solid #7a8ca8; border-radius: 1px; background: linear-gradient(#f4f7fb, #d6dde8 45%, #b9c5d6); }
.thumb i { width: 1px; height: 7px; background: #7486a4; }
.d-foot { display: flex; align-items: flex-start; padding-top: 10px; line-height: 13px; }
.d-foot > input { appearance: none; width: 12px; height: 12px; margin: 15px 6px 0 1px; background: #fff; border: 1px solid #fff; border-top-color: #555; border-left-color: #555; }
.d-foot label { width: 148px; margin-top: 2px; }
.plus { width: 22px; height: 22px; margin: 11px auto 0 14px; background: linear-gradient(#fff, #fff) center / 16px 6px no-repeat, linear-gradient(#fff, #fff) center / 6px 18px no-repeat, #0000d8; }
.grey { width: 113px; height: 57px; margin-left: 7px; display: flex; flex-direction: column; align-items: center; gap: 8px; padding-top: 4px; border: 1px solid #000; border-radius: 2px; background: #e0e0e0; box-shadow: inset 1px 1px #fff, inset -2px -2px #7b93bc; }
.grey svg { width: 28px; height: 28px; flex: none; }
.cursor { position: absolute; left: 245px; top: 168px; width: 18px; height: 30px; }
.badge { position: absolute; left: -49px; top: 109px; width: 57px; height: 57px; border: 1px solid #fff; border-radius: 50%; background: #4aa83c; color: #fff; text-align: center; font: bold 46px/54px "Open Sans", sans-serif; }
```
